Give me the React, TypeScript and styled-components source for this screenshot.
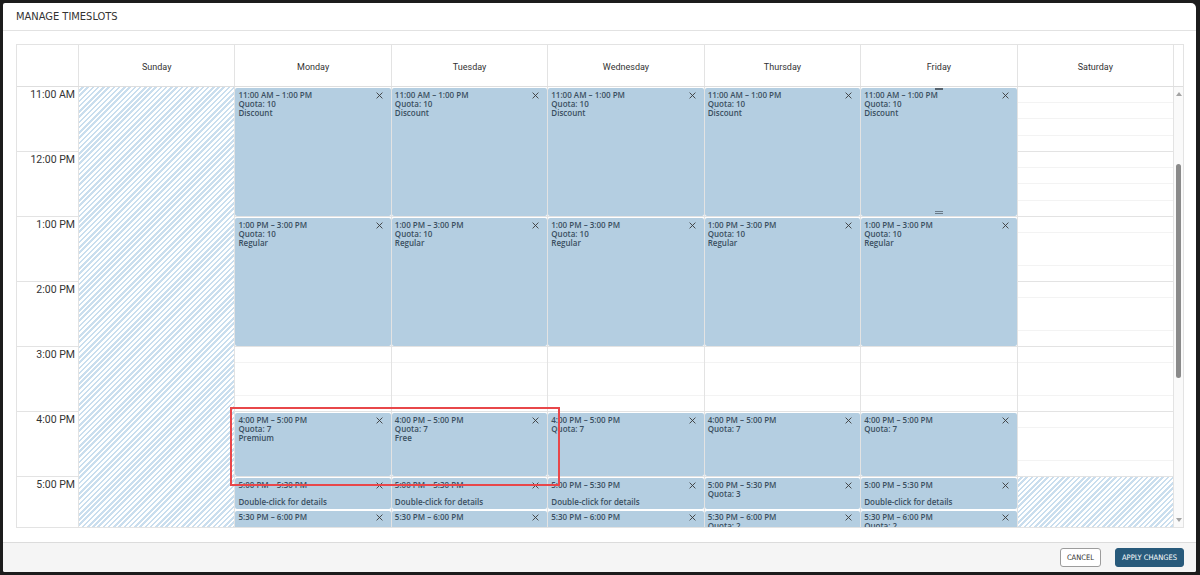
import styled, { createGlobalStyle } from "styled-components";

const GlobalStyle = createGlobalStyle`
  html, body {
    margin: 0;
    padding: 0;
    background: #1c1c1c;
  }
  body {
    font-family: Roboto, "Liberation Sans", sans-serif;
  }
  * {
    box-sizing: border-box;
  }
`;

const condensed = `"Liberation Sans Narrow", "DejaVu Sans Condensed", Roboto, sans-serif`;

const hatch = `repeating-linear-gradient(135deg, #ffffff 0 1.9px, #cadeee 1.9px 3.7px)`;

const Page = styled.div`
  height: 575px;
  padding: 3px 4px 3px 3px;
`;

const Modal = styled.div`
  height: 569px;
  background: #fff;
  border-radius: 2px 5px 2px 2px;
  display: flex;
  flex-direction: column;
  overflow: hidden;
`;

const Header = styled.div`
  flex: none;
  height: 28px;
  display: flex;
  align-items: center;
  padding: 0 13px;
  border-bottom: 1px solid #e2e2e2;
  font-family: ${condensed};
  font-size: 11px;
  color: #333;
  text-transform: uppercase;
`;

const Content = styled.div`
  flex: 1;
  padding: 13px 12px 14px 13px;
`;

const Calendar = styled.div`
  height: 484px;
  border: 1px solid #e3e3e3;
  display: flex;
  flex-direction: column;
`;

const HeadRow = styled.div`
  flex: none;
  height: 42px;
  display: grid;
  grid-template-columns: 61px repeat(7, 1fr) 10px;
  border-bottom: 1px solid #dedede;
`;

const HeadCell = styled.div<{ $first?: boolean }>`
  display: flex;
  align-items: center;
  justify-content: center;
  padding-top: 2px;
  border-left: ${({ $first }) => ($first ? "none" : "1px solid #e3e3e3")};
  font-size: 9px;
  color: #333;
`;

const BodyWrap = styled.div`
  position: relative;
  flex: 1;
  display: flex;
  overflow: hidden;
`;

const Grid = styled.div`
  flex: 1;
  display: grid;
  grid-template-columns: 61px repeat(7, 1fr);
  align-items: start;
`;

const TimeCol = styled.div`
  display: grid;
  grid-template-rows: repeat(7, 65px);
`;

const TimeLabel = styled.div`
  border-bottom: 1px solid #e3e3e3;
  text-align: right;
  padding: 1px 3px 0 0;
  font-size: 10.5px;
  color: #333;
`;

const DayCol = styled.div`
  display: grid;
  grid-template-rows: repeat(28, 16.25px);
  border-left: 1px solid #e3e3e3;
  background: repeating-linear-gradient(
      to bottom,
      transparent 0 64px,
      #e3e3e3 64px 65px
    ),
    repeating-linear-gradient(
      to bottom,
      transparent 0 15.25px,
      #f3f3f3 15.25px 16.25px
    );
`;

const Hatch = styled.div<{ $start: number }>`
  grid-column: 1;
  grid-row: ${({ $start }) => $start + 1} / -1;
  background: ${hatch};
`;

const Event = styled.div<{ $start: number; $span: number }>`
  grid-column: 1;
  grid-row: ${({ $start }) => $start + 1} / span ${({ $span }) => $span};
  position: relative;
  min-height: 0;
  margin: 1px 0;
  padding: 1.5px 3px 2.5px 3px;
  background: #b4cee1;
  border-radius: 2px;
  display: flex;
  flex-direction: column;
  overflow: hidden;
  font-family: "Open Sans", sans-serif;
  font-size: 8px;
  font-weight: 600;
  line-height: 9.3px;
  color: #3a4e60;
`;

const EventHead = styled.div`
  display: flex;
  align-items: center;
  justify-content: space-between;
`;

const Close = styled.svg`
  flex: none;
  width: 7px;
  height: 7px;
  margin-right: 5px;
  margin-top: 2px;
`;

const Hint = styled.div`
  margin-top: auto;
`;

const Handle = styled.div<{ $bottom?: boolean }>`
  position: absolute;
  left: 50%;
  width: 8px;
  transform: translateX(-50%);
  ${({ $bottom }) =>
    $bottom
      ? "bottom: 2px; height: 3px; border-top: 1px solid #6a7a88; border-bottom: 1px solid #6a7a88;"
      : "top: 0; height: 2px; background: #55626e;"}
`;

const Marker = styled.div`
  position: absolute;
  left: 213px;
  top: 320px;
  width: 330px;
  height: 79px;
  border: 2px solid #e8474a;
  pointer-events: none;
`;

const ScrollBar = styled.div`
  flex: none;
  width: 10px;
  border-left: 1px solid #e3e3e3;
  background: #fafafa;
  display: flex;
  flex-direction: column;
  align-items: center;
  padding: 5px 0;
`;

const Arrow = styled.div<{ $down?: boolean }>`
  width: 0;
  height: 0;
  border-left: 3px solid transparent;
  border-right: 3px solid transparent;
  ${({ $down }) =>
    $down
      ? "border-top: 4px solid #a3a3a3; margin-top: auto;"
      : "border-bottom: 4px solid #a3a3a3;"}
`;

const Thumb = styled.div<{ $offset: number; $size: number }>`
  width: 5px;
  height: ${({ $size }) => $size}px;
  margin-top: ${({ $offset }) => $offset}px;
  border-radius: 3px;
  background: #8a8a8a;
`;

const Footer = styled.div`
  flex: none;
  height: 30px;
  border-top: 1px solid #dcdcdc;
  background: #f5f5f5;
  display: flex;
  justify-content: flex-end;
  align-items: center;
  gap: 14px;
  padding: 0 12px;
`;

const Button = styled.button<{ $primary?: boolean }>`
  height: 19px;
  padding: 0 6px;
  border-radius: 3px;
  border: 1px solid ${({ $primary }) => ($primary ? "#285a7b" : "#9c9c9c")};
  background: ${({ $primary }) => ($primary ? "#285a7b" : "#fff")};
  color: ${({ $primary }) => ($primary ? "#fff" : "#333")};
  font-family: ${condensed};
  font-size: 7.5px;
  text-transform: uppercase;
  cursor: pointer;
`;

interface ISlot {
  start: number;
  span: number;
  time: string;
  quota?: string;
  tag?: string;
  hint?: boolean;
  selected?: boolean;
}

const days = [
  "Sunday",
  "Monday",
  "Tuesday",
  "Wednesday",
  "Thursday",
  "Friday",
  "Saturday",
];

const hours = ["11:00 AM", "12:00 PM", "1:00 PM", "2:00 PM", "3:00 PM", "4:00 PM", "5:00 PM"];

// quarter-hour slots counted from 11:00 AM
const weekday = (
  fourTag: string | undefined,
  five: Partial<ISlot>,
  fiveThirty: Partial<ISlot>,
  selected = false
): ISlot[] => [
  { start: 0, span: 8, time: "11:00 AM – 1:00 PM", quota: "Quota: 10", tag: "Discount", selected },
  { start: 8, span: 8, time: "1:00 PM – 3:00 PM", quota: "Quota: 10", tag: "Regular" },
  { start: 20, span: 4, time: "4:00 PM – 5:00 PM", quota: "Quota: 7", tag: fourTag },
  { start: 24, span: 2, time: "5:00 PM – 5:30 PM", ...five },
  { start: 26, span: 2, time: "5:30 PM – 6:00 PM", ...fiveThirty },
];

const schedule: { hatchFrom?: number; slots: ISlot[] }[] = [
  { hatchFrom: 0, slots: [] },
  { slots: weekday("Premium", { hint: true }, {}) },
  { slots: weekday("Free", { hint: true }, {}) },
  { slots: weekday(undefined, { hint: true }, {}) },
  { slots: weekday(undefined, { quota: "Quota: 3" }, { quota: "Quota: 2" }) },
  { slots: weekday(undefined, { hint: true }, { quota: "Quota: 2" }, true) },
  { hatchFrom: 24, slots: [] },
];

const CloseIcon = () => (
  <Close viewBox="0 0 7 7">
    <path d="M0.6 0.6L6.4 6.4M6.4 0.6L0.6 6.4" stroke="#3a3a3a" strokeWidth="0.9" />
  </Close>
);

const App = () => {
  return (
    <>
      <GlobalStyle />
      <Page>
        <Modal>
          <Header>Manage Timeslots</Header>
          <Content>
            <Calendar>
              <HeadRow>
                <HeadCell $first />
                {days.map((d) => (
                  <HeadCell key={d}>{d}</HeadCell>
                ))}
                <HeadCell />
              </HeadRow>
              <BodyWrap>
                <Grid>
                  <TimeCol>
                    {hours.map((h) => (
                      <TimeLabel key={h}>{h}</TimeLabel>
                    ))}
                  </TimeCol>
                  {schedule.map((day, i) => (
                    <DayCol key={days[i]}>
                      {day.hatchFrom !== undefined && <Hatch $start={day.hatchFrom} />}
                      {day.slots.map((s) => (
                        <Event key={s.time} $start={s.start} $span={s.span}>
                          <EventHead>
                            <span>{s.time}</span>
                            <CloseIcon />
                          </EventHead>
                          {s.quota && <div>{s.quota}</div>}
                          {s.tag && <div>{s.tag}</div>}
                          {s.hint && <Hint>Double-click for details</Hint>}
                          {s.selected && (
                            <>
                              <Handle />
                              <Handle $bottom />
                            </>
                          )}
                        </Event>
                      ))}
                    </DayCol>
                  ))}
                </Grid>
                <ScrollBar>
                  <Arrow />
                  <Thumb $offset={68} $size={214} />
                  <Arrow $down />
                </ScrollBar>
                <Marker />
              </BodyWrap>
            </Calendar>
          </Content>
          <Footer>
            <Button>Cancel</Button>
            <Button $primary>Apply Changes</Button>
          </Footer>
        </Modal>
      </Page>
    </>
  );
};

export default App;
